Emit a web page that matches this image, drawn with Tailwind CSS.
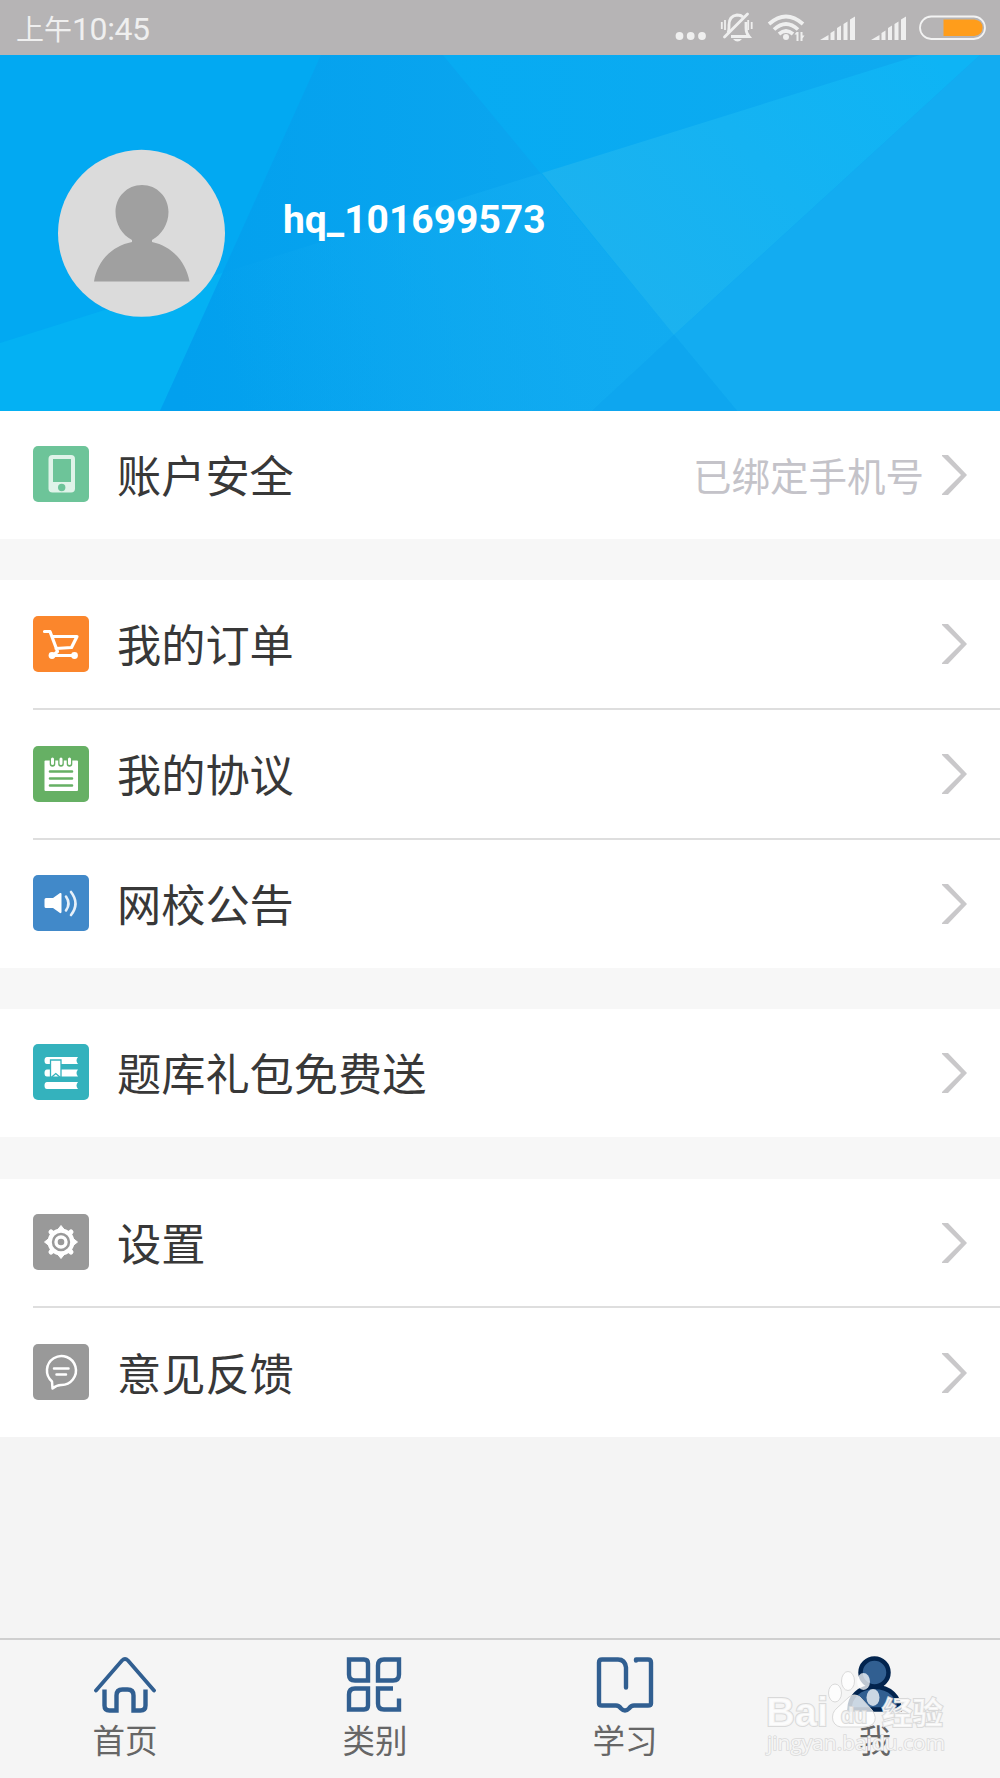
<!DOCTYPE html>
<html lang="zh-CN">
<head>
  <meta charset="UTF-8" />
  <meta name="viewport" content="width=device-width, initial-scale=1" />
  <title>我</title>
  <script src="https://cdn.jsdelivr.net/npm/@tailwindcss/browser@4"></script>
</head>
<body class="bg-[#f4f4f4] font-['Noto_Sans_CJK_SC',sans-serif] text-[#383838]">
<div class="w-[1000px] h-[1778px] flex flex-col overflow-hidden">

  <!-- status bar -->
  <header class="h-[55px] shrink-0 bg-[#b6b4b5] flex items-center justify-between pl-[16px] text-[#efefef]">
    <div class="flex items-center leading-none">
      <span class="text-[28px]">上午</span>
      <span class="font-['Roboto'] text-[32px] tracking-[-0.4px] pt-[2px]">10:45</span>
    </div>
    <svg class="w-[340px] h-[55px]" viewBox="0 0 340 55" fill="#efefef">
      <circle cx="19.500" cy="36" r="3.900" /><circle cx="30.700" cy="36" r="3.900" /><circle cx="42" cy="36" r="3.900" />
      <!-- muted bell -->
      <g fill="none" stroke="#efefef" stroke-width="2.200">
        <path d="M68 33q1-2 1-6v-2q0-9 8-10q4 0 6 2M86 22v6q0 5 3 8.500H71" stroke-width="2.800" />
        <path d="M64.500 37L87.500 14" stroke-width="2.800" stroke-linecap="round" />
        <path d="M61.800 22v7M65 20v10M88.200 20v10M91.700 22v7" stroke-width="1.800" />
      </g>
      <path d="M73 39h9q-4.500 5-9 0z" />
      <!-- wifi -->
      <g fill="none" stroke="#efefef" stroke-width="3.700">
        <path d="M109 24q17-15 34 0" />
        <path d="M114 29.500q12-11 24 0" />
        <path d="M119 34q7-6 14 0" />
      </g>
      <circle cx="126" cy="37" r="3" />
      <path d="M136.500 32h2v9h-2zM134.500 34.500l2-2.500v2.500zM140.500 32h2v9h-2zM142.500 35.500h2l-2 3z" />
      <!-- signal -->
      <g id="signal"><path d="M160 40l8.500-5v5zM170.500 33l4-2.500v9.500h-4zM177 28l4-2.500v14.500h-4zM183.500 24l4-2.500v18.500h-4zM190 19.500l5-3V40h-5z" /></g>
      <use href="#signal" x="51" />
      <rect x="260" y="16.500" width="65" height="22.500" rx="11.200" fill="none" stroke="#f3f3f3" stroke-width="1.800" />
      <path d="M283.500 19.500h31q8 1 8 8.300t-8 8.200h-31z" fill="#ff9d1b" />
    </svg>
  </header>

  <!-- profile -->
  <section class="relative h-[356px] shrink-0 overflow-hidden bg-[#05a6f1]">
    <svg class="absolute inset-0 w-full h-full" viewBox="0 55 1000 356" preserveAspectRatio="none">
      <defs>
        <linearGradient id="mid" gradientUnits="userSpaceOnUse" x1="180" y1="0" x2="700" y2="0"><stop offset="0" stop-color="#02a0ee" /><stop offset="1" stop-color="#0fa8ef" /></linearGradient>
        <linearGradient id="low" gradientUnits="userSpaceOnUse" x1="225" y1="350" x2="580" y2="250"><stop offset="0" stop-color="#12acf1" stop-opacity="0" /><stop offset="1" stop-color="#12acf1" stop-opacity=".8" /></linearGradient>
        <linearGradient id="right" gradientUnits="userSpaceOnUse" x1="450" y1="0" x2="900" y2="0"><stop offset="0" stop-color="#07abf2" /><stop offset="1" stop-color="#0eaaf0" /></linearGradient>
        <linearGradient id="beam" gradientUnits="userSpaceOnUse" x1="940" y1="60" x2="640" y2="330"><stop offset="0" stop-color="#0eb4f5" /><stop offset="1" stop-color="#1cb2ef" /></linearGradient>
      </defs>
      <path d="M0 55H321L160 411H0z" fill="#02a9f2" />
      <path d="M0 343L225 272L160 411H0z" fill="#04b1f3" />
      <path d="M321 55H443L737 411H160z" fill="url(#mid)" />
      <path d="M225 272L542 173L674 335L592 411H160z" fill="url(#low)" />
      <path d="M443 55H1000V411H737z" fill="url(#right)" />
      <path d="M542 173L920 55H980L674 335z" fill="url(#beam)" />
      <path d="M980 55H1000V411H737L674 335z" fill="#13acf1" />
      <path d="M674 335L737 411H592z" fill="#0ea6ef" />
    </svg>
    <div class="relative flex items-start pt-[94px] pl-[58px]">
      <svg class="w-[168px] h-[168px]" viewBox="0 0 168 168">
        <circle cx="83.500" cy="84.300" r="83.500" fill="#dbdbdb" />
        <path d="M84 36c15 0 26.500 12 26.500 27 0 12-7 23-16.500 28v2c20 4 34 20 37.500 39.500H36c3-19.500 17-35.500 38-39.500v-2C64 86 57.500 75 57.500 63 57.500 48 69 36 84 36z" fill="#a0a0a0" />
      </svg>
      <p class="ml-[57px] mt-[47px] font-['Roboto'] font-bold text-[39px] leading-[48px] text-white">hq_101699573</p>
    </div>
  </section>

  <!-- menu -->
  <main class="bg-[#f7f7f7] text-[44.200px] leading-none">
    <section class="bg-white">
      <div class="h-[128px] flex items-center pl-[33px] pr-[33px]">
        <svg class="w-[56px] h-[56px] mb-[2px]" viewBox="0 0 56 56">
          <rect width="56" height="56" rx="5" fill="#6dc499" />
          <rect x="15.500" y="9" width="26.500" height="37.500" rx="4" fill="#e0f3e9" />
          <path d="M20 13h18v23H20z" fill="#6dc499" /><circle cx="28.700" cy="41.500" r="3.700" fill="#6dc499" />
        </svg>
        <span class="ml-[28px] mb-px">账户安全</span>
        <span class="ml-auto mr-[18px] mb-px text-[38.500px] text-[#c4c3c9]">已绑定手机号</span>
        <svg class="w-[25px] h-[40px]" viewBox="0 0 25 40" fill="#c9c8ca"><path d="M0 0h6L25 20 6 40H0v-1L19 20 0 1z" /></svg>
      </div>
    </section>

    <section class="bg-white mt-[41px]">
      <div class="h-[128px] flex items-center pl-[33px] pr-[33px]">
        <svg class="w-[56px] h-[56px]" viewBox="0 0 56 56">
          <rect width="56" height="56" rx="5" fill="#fb862c" />
          <g fill="none" stroke="#fff" stroke-width="3.200" stroke-linecap="round" stroke-linejoin="round">
            <path d="M11.500 15.500H17L24.500 35.500 20 39.500H40M19 20.500H44L38.500 31.500 23 32.500" />
          </g>
          <circle cx="19" cy="39.500" r="3.400" fill="#fff" /><circle cx="41.500" cy="39.500" r="3.400" fill="#fff" />
        </svg>
        <span class="ml-[28px] mb-px">我的订单</span>
        <svg class="ml-auto w-[25px] h-[40px]" viewBox="0 0 25 40" fill="#c9c8ca"><path d="M0 0h6L25 20 6 40H0v-1L19 20 0 1z" /></svg>
      </div>
      <div class="ml-[33px] h-[2px] bg-[#dedede]"></div>
      <div class="h-[128px] flex items-center pl-[33px] pr-[33px]">
        <svg class="w-[56px] h-[56px] mb-px" viewBox="0 0 56 56">
          <rect width="56" height="56" rx="5" fill="#66b064" />
          <rect x="11.500" y="14.500" width="33.500" height="30.500" rx="1" fill="#fff" />
          <path d="M19.500 13v5M28 13v5M36.500 13v5" stroke="#66b064" stroke-width="5.600" stroke-linecap="round" />
          <path d="M19.500 13v4.500M28 13v4.500M36.500 13v4.500" stroke="#fff" stroke-width="3" stroke-linecap="round" />
          <path d="M17 25.500h22M17 32.500h22M17 39.500h22" stroke="#66b064" stroke-width="2.600" stroke-linecap="round" />
        </svg>
        <span class="ml-[28px] mb-px">我的协议</span>
        <svg class="ml-auto w-[25px] h-[40px]" viewBox="0 0 25 40" fill="#c9c8ca"><path d="M0 0h6L25 20 6 40H0v-1L19 20 0 1z" /></svg>
      </div>
      <div class="ml-[33px] h-[2px] bg-[#dedede]"></div>
      <div class="h-[128px] flex items-center pl-[33px] pr-[33px]">
        <svg class="w-[56px] h-[56px] mb-[2px]" viewBox="0 0 56 56">
          <rect width="56" height="56" rx="5" fill="#4189c9" />
          <path d="M13 23h7l7-5q1.500-.5 1.500 1v18q0 1.500-1.500 1l-7-5h-7q-1.500 0-1.500-1.500v-7q0-1.500 1.500-1.500z" fill="#fff" />
          <g fill="none" stroke="#e6f0f9" stroke-width="2.600" stroke-linecap="round">
            <path d="M33 21.500q5 7 0 14" /><path d="M38 17q9 11.500 0 23" />
          </g>
        </svg>
        <span class="ml-[28px] mb-px">网校公告</span>
        <svg class="ml-auto w-[25px] h-[40px]" viewBox="0 0 25 40" fill="#c9c8ca"><path d="M0 0h6L25 20 6 40H0v-1L19 20 0 1z" /></svg>
      </div>
    </section>

    <section class="bg-white mt-[41px]">
      <div class="h-[128px] flex items-center pl-[33px] pr-[33px]">
        <svg class="w-[56px] h-[56px] mb-[2px]" viewBox="0 0 56 56">
          <rect width="56" height="56" rx="5" fill="#34b2bd" />
          <g fill="#fff">
            <path id="book" d="M14 13H45q-3 3.500 0 7H14q-2.500 0-2.500-3.500T14 13z" />
            <use href="#book" y="12.500" /><use href="#book" y="25" />
          </g>
          <path d="M17.500 16h10.500v18l-5.200-4.500-5.300 4.500z" fill="#fff" stroke="#34b2bd" stroke-width="1.300" />
        </svg>
        <span class="ml-[28px] mb-px">题库礼包免费送</span>
        <svg class="ml-auto w-[25px] h-[40px]" viewBox="0 0 25 40" fill="#c9c8ca"><path d="M0 0h6L25 20 6 40H0v-1L19 20 0 1z" /></svg>
      </div>
    </section>

    <section class="bg-white mt-[42px]">
      <div class="h-[127px] flex items-center pl-[33px] pr-[33px]">
        <svg class="w-[56px] h-[56px] mb-[1px]" viewBox="0 0 56 56">
          <rect width="56" height="56" rx="5" fill="#999999" />
          <circle cx="28" cy="28" r="11.300" fill="none" stroke="#fff" stroke-width="4.200" />
          <path fill="#fff" stroke="#fff" stroke-linejoin="round" d="M24 16.500L28 11.500L32 16.500zM24 39.500L28 44.500L32 39.500zM16.500 24L11.500 28L16.500 32zM39.500 24L44.500 28L39.500 32z" />
          <path stroke="#fff" stroke-width="5" stroke-linecap="round" d="M19 19l-1-1M37 19l1-1M19 37l-1 1M37 37l1 1" />
          <circle cx="28" cy="28" r="5" fill="none" stroke="#fff" stroke-width="3.400" />
        </svg>
        <span class="ml-[28px]">设置</span>
        <svg class="ml-auto w-[25px] h-[40px]" viewBox="0 0 25 40" fill="#c9c8ca"><path d="M0 0h6L25 20 6 40H0v-1L19 20 0 1z" /></svg>
      </div>
      <div class="ml-[33px] h-[2px] bg-[#dedede]"></div>
      <div class="h-[129px] flex items-center pl-[33px] pr-[33px]">
        <svg class="w-[56px] h-[56px] mb-px" viewBox="0 0 56 56">
          <rect width="56" height="56" rx="5" fill="#999999" />
          <g fill="none" stroke="#fff" stroke-width="2.500" stroke-linecap="round" stroke-linejoin="round">
            <path d="M19 37.500A14.500 14.500 0 1 1 28 41q-4 0-8.500 3.500z" />
            <path d="M21 24.500h14.500M23.500 30.500h9.500" />
          </g>
        </svg>
        <span class="ml-[28px] mb-px">意见反馈</span>
        <svg class="ml-auto w-[25px] h-[40px]" viewBox="0 0 25 40" fill="#c9c8ca"><path d="M0 0h6L25 20 6 40H0v-1L19 20 0 1z" /></svg>
      </div>
    </section>
  </main>

  <!-- tab bar -->
  <nav class="relative mt-auto h-[140px] shrink-0 border-t-2 border-[#cfcfcf] bg-[#f5f5f5] grid grid-cols-4 text-[32.500px] leading-none text-[#666666]">
    <a class="flex flex-col items-center pt-[15px]">
      <svg class="w-[62px] h-[60px]" viewBox="0 0 62 60" fill="none" stroke="#315f91">
        <path d="M2 35.500L28 5.500q3-3 6 0L60 35.500" stroke-width="3.800" stroke-linecap="round" />
        <path d="M10.500 34.500v16q0 5 5 5h7V40.500q0-6 6-6h5q6 0 6 6v15h7q5 0 5-5V34.500" stroke-width="4.400" />
      </svg>
      <span class="mt-[8px]">首页</span>
    </a>
    <a class="flex flex-col items-center pt-[15px]">
      <svg class="w-[62px] h-[60px]" viewBox="1 0.5 62 60" fill="none" stroke="#315f91" stroke-width="4.400">
        <path d="M6 5h15q4 0 4 4v17H12q-6 0-6-6z" />
        <path d="M56 5H41q-6 0-6 6v15h15q6 0 6-6z" />
        <path d="M6 55h15q4 0 4-4V34H12q-6 0-6 6z" />
        <path d="M50 34H35v15q0 6 6 6h15V44" />
      </svg>
      <span class="mt-[8px]">类别</span>
    </a>
    <a class="flex flex-col items-center pt-[15px]">
      <svg class="w-[62px] h-[60px]" viewBox="0 0.5 62 60" fill="none" stroke="#315f91" stroke-width="4.400" stroke-linecap="round" stroke-linejoin="round">
        <path d="M32 33V13q-1-8-8-8H8q-3 0-3 3v41q0 2 3 2h14q3 0 5 3 4 4 8 0 2-3 5-3h14q3 0 3-2V8q0-3-3-3H42v1" />
      </svg>
      <span class="mt-[8px]">学习</span>
    </a>
    <a class="flex flex-col items-center pt-[15px]">
      <svg class="w-[62px] h-[60px]" viewBox="0.5 0 62 60">
        <path d="M6 54.500C6 42 15 32 31 32S56 42 56 54.500z" fill="#315f91" stroke="#02244e" stroke-width="4.500" />
        <circle cx="31" cy="17.500" r="14" fill="#315f91" stroke="#02244e" stroke-width="4.500" />
      </svg>
      <span class="mt-[8px]">我</span>
    </a>

    <!-- watermark -->
    <svg class="absolute left-[760px] top-[26px] w-[200px] h-[100px]" viewBox="760 1666 200 100" fill="#fff" fill-opacity=".75" stroke="#d9d9d9" stroke-width="1">
      <ellipse cx="835" cy="1693" rx="6.500" ry="9" /><ellipse cx="848" cy="1681" rx="6.500" ry="9.500" />
      <ellipse cx="863.500" cy="1681.500" rx="6.500" ry="8.500" stroke="none" /><ellipse cx="873" cy="1697.500" rx="6.500" ry="8.500" stroke="none" />
      <path d="M849 1697q5-4 11 0l12 13q6 8 1 14-3 3-10 3h-18q-9 1-12-6-2-8 4-13z" />
      <g class="font-['Liberation_Sans'] font-bold" paint-order="stroke" stroke-width="2">
        <text x="766" y="1726" font-size="40" textLength="62" lengthAdjust="spacingAndGlyphs">Bai</text>
        <text x="841" y="1723" font-size="22" textLength="26" lengthAdjust="spacingAndGlyphs" fill-opacity=".6">du</text>
      </g>
      <text class="font-['Noto_Sans_CJK_SC'] font-bold" x="882" y="1724" font-size="30.500" paint-order="stroke" stroke-width="2">经验</text>
      <text class="font-['Open_Sans']" x="767" y="1750" font-size="20" textLength="178" lengthAdjust="spacingAndGlyphs" paint-order="stroke" stroke-width="1.500">jingyan.baidu.com</text>
    </svg>
  </nav>
</div>
</body>
</html>
